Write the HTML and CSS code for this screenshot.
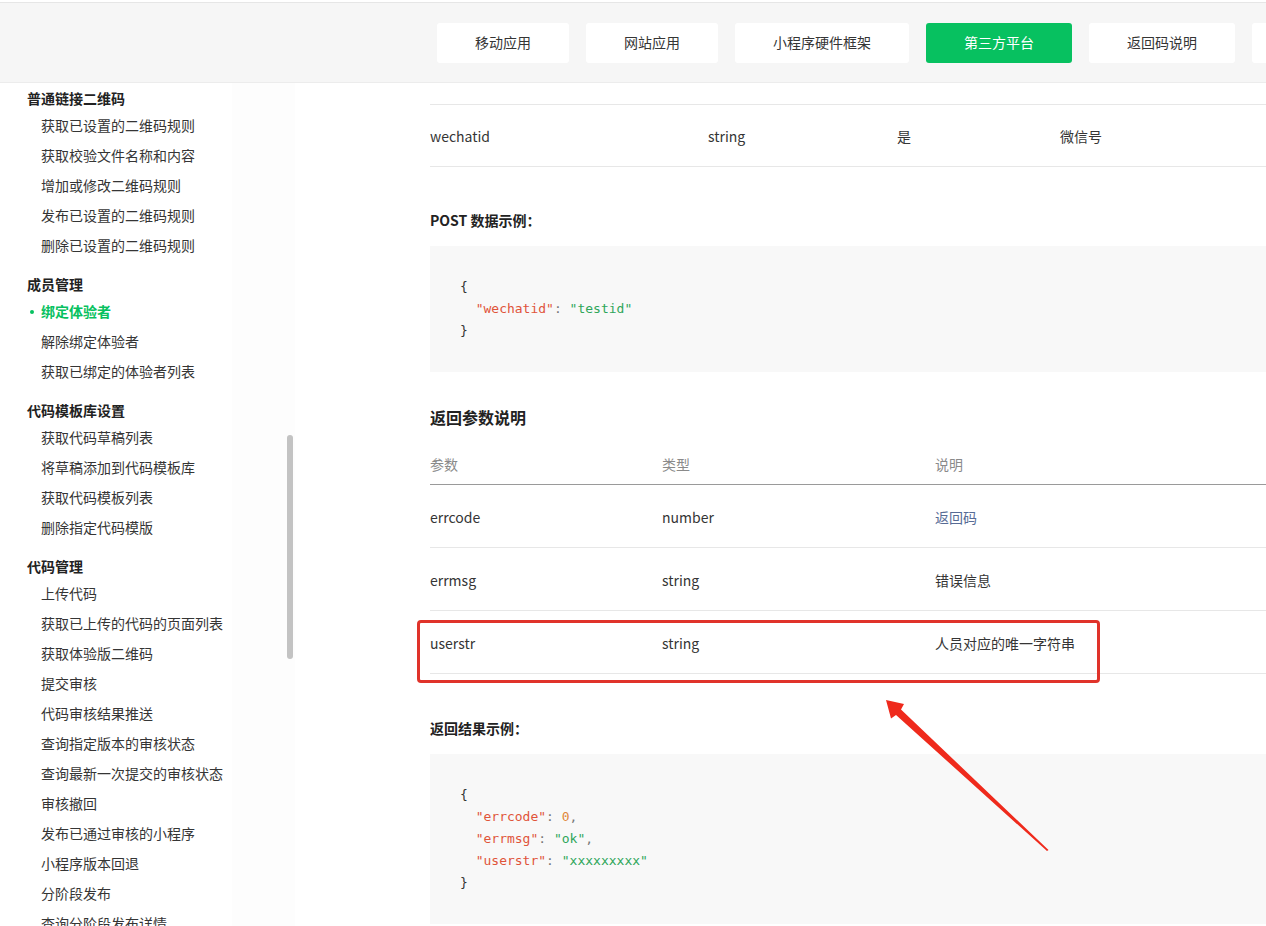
FILE: index.html
```html
<!DOCTYPE html>
<html lang="zh-CN">
<head>
<meta charset="utf-8">
<title>绑定体验者</title>
<link rel="stylesheet" href="styles.css">
</head>
<body>
<header class="topbar">
  <nav class="tabs">
    <a class="tab">移动应用</a>
    <a class="tab">网站应用</a>
    <a class="tab">小程序硬件框架</a>
    <a class="tab active">第三方平台</a>
    <a class="tab">返回码说明</a>
    <a class="tab">更新日志</a>
  </nav>
</header>
<div class="layout">
  <aside class="sidebar">
    <div class="group">
      <div class="group-title">普通链接二维码</div>
      <a class="item">获取已设置的二维码规则</a>
      <a class="item">获取校验文件名称和内容</a>
      <a class="item">增加或修改二维码规则</a>
      <a class="item">发布已设置的二维码规则</a>
      <a class="item">删除已设置的二维码规则</a>
    </div>
    <div class="group">
      <div class="group-title">成员管理</div>
      <a class="item current">绑定体验者</a>
      <a class="item">解除绑定体验者</a>
      <a class="item">获取已绑定的体验者列表</a>
    </div>
    <div class="group">
      <div class="group-title">代码模板库设置</div>
      <a class="item">获取代码草稿列表</a>
      <a class="item">将草稿添加到代码模板库</a>
      <a class="item">获取代码模板列表</a>
      <a class="item">删除指定代码模版</a>
    </div>
    <div class="group">
      <div class="group-title">代码管理</div>
      <a class="item">上传代码</a>
      <a class="item">获取已上传的代码的页面列表</a>
      <a class="item">获取体验版二维码</a>
      <a class="item">提交审核</a>
      <a class="item">代码审核结果推送</a>
      <a class="item">查询指定版本的审核状态</a>
      <a class="item">查询最新一次提交的审核状态</a>
      <a class="item">审核撤回</a>
      <a class="item">发布已通过审核的小程序</a>
      <a class="item">小程序版本回退</a>
      <a class="item">分阶段发布</a>
      <a class="item">查询分阶段发布详情</a>
    </div>
    <div class="scrollbar"></div>
  </aside>
  <main class="content">
    <div class="param-table">
      <div class="row cols4">
        <span>wechatid</span><span>string</span><span>是</span><span>微信号</span>
      </div>
    </div>

    <h4 class="sub-title">POST 数据示例：</h4>
    <pre class="code"><span class="p">{</span>
  <span class="k">"wechatid"</span><span class="c">: </span><span class="s">"testid"</span>
<span class="p">}</span></pre>

    <h3 class="section-title">返回参数说明</h3>
    <div class="result-table">
      <div class="row head cols3"><span>参数</span><span>类型</span><span>说明</span></div>
      <div class="row cols3"><span>errcode</span><span>number</span><span class="link">返回码</span></div>
      <div class="row cols3"><span>errmsg</span><span>string</span><span>错误信息</span></div>
      <div class="row cols3"><span>userstr</span><span>string</span><span>人员对应的唯一字符串</span></div>
      <div class="highlight"></div>
    </div>

    <h4 class="sub-title second">返回结果示例：</h4>
    <pre class="code"><span class="p">{</span>
  <span class="k">"errcode"</span><span class="c">: </span><span class="n">0</span><span class="c">,</span>
  <span class="k">"errmsg"</span><span class="c">: </span><span class="s">"ok"</span><span class="c">,</span>
  <span class="k">"userstr"</span><span class="c">: </span><span class="s">"xxxxxxxxx"</span>
<span class="p">}</span></pre>
  </main>
</div>
<svg class="arrow" width="200" height="170" viewBox="860 690 200 170" xmlns="http://www.w3.org/2000/svg">
  <polygon points="886,700 904,704 901,709.5 1048.5,850 1047,851 896,715 891,718.5" fill="#ef2a1c"/>
</svg>
</body>
</html>
```
FILE: styles.css
```css
* { box-sizing: border-box; }
html, body {
  margin: 0;
  padding: 0;
  height: 926px;
  overflow: hidden;
}
body {
  position: relative;
  background: #fff;
  font-family: "Noto Sans CJK SC", "Noto Sans", sans-serif;
  font-size: 14px;
  color: #353535;
}
a { text-decoration: none; color: inherit; }

.topbar {
  height: 81px;
  margin-top: 2px;
  background: #f6f6f6;
  border-top: 1px solid #e6e6e6;
  border-bottom: 1px solid #ececec;
  padding: 20px 0 0 437px;
  overflow: hidden;
}
.tabs {
  display: flex;
  gap: 17px;
  white-space: nowrap;
}
.tab {
  flex: none;
  height: 40px;
  line-height: 39px;
  padding: 0 38px;
  background: #fff;
  border-radius: 3px;
  font-size: 14px;
  color: #353535;
}
.tab.active {
  background: #07c160;
  color: #fff;
}

.layout {
  display: flex;
  height: 843px;
  overflow: hidden;
}
.sidebar {
  position: relative;
  flex: none;
  width: 295px;
  padding: 3px 0 0 27px;
  overflow: hidden;
  background: linear-gradient(to right, #fff 232px, #fdfdfd 232px);
}
.group { display: flex; flex-direction: column; }
.group + .group { margin-top: 12px; }
.group-title {
  height: 24px;
  line-height: 24px;
  font-weight: 600;
  color: #222;
  font-size: 14px;
}
.item {
  position: relative;
  height: 30px;
  line-height: 30px;
  padding-left: 14px;
  color: #353535;
  white-space: nowrap;
}
.item.current {
  color: #07c160;
  font-weight: 700;
}
.item.current::before {
  content: "";
  position: absolute;
  left: 3px;
  top: 14px;
  width: 4px;
  height: 4px;
  border-radius: 50%;
  background: #07c160;
}
.scrollbar {
  position: absolute;
  left: 287px;
  top: 352px;
  width: 6px;
  height: 224px;
  border-radius: 3px;
  background: #c3c3c3;
}

.content {
  flex: none;
  width: 900px;
  margin-left: 135px;
  padding-top: 21px;
}
.row {
  display: grid;
  height: 63px;
  align-items: center;
  border-bottom: 1px solid #e7e7e7;
}
.row > span { padding-top: 1px; }
.cols4 { grid-template-columns: 278px 189px 163px 1fr; }
.cols3 { grid-template-columns: 232px 273px 1fr; }
.param-table .row { border-top: 1px solid #e7e7e7; }

.sub-title {
  margin: 42px 0 15px;
  font-size: 14px;
  line-height: 22px;
  font-weight: 700;
  color: #222;
}
.sub-title.second { margin-top: 43px; }
.section-title {
  margin: 33px 0 14px;
  font-size: 16px;
  line-height: 24px;
  font-weight: 600;
  color: #222;
}
.code {
  margin: 0;
  padding: 30px 30px 30px;
  background: #f8f8f8;
  font-family: "DejaVu Sans Mono", "Liberation Mono", monospace;
  font-size: 13px;
  line-height: 22px;
  color: #333;
}
.code .k { color: #e0543a; }
.code .s { color: #2fa65a; }
.code .n { color: #e0873a; }
.code .c { color: #777; }

.result-table { position: relative; }
.row.head {
  height: 42px;
  border-bottom-color: #9a9a9a;
  color: #8a8a8a;
}
.link { color: #576b95; }
.highlight {
  position: absolute;
  left: -13px;
  top: 177px;
  width: 683px;
  height: 63px;
  border: 3px solid #e0332a;
  border-radius: 4px;
}
.arrow {
  position: absolute;
  left: 860px;
  top: 690px;
}
```
